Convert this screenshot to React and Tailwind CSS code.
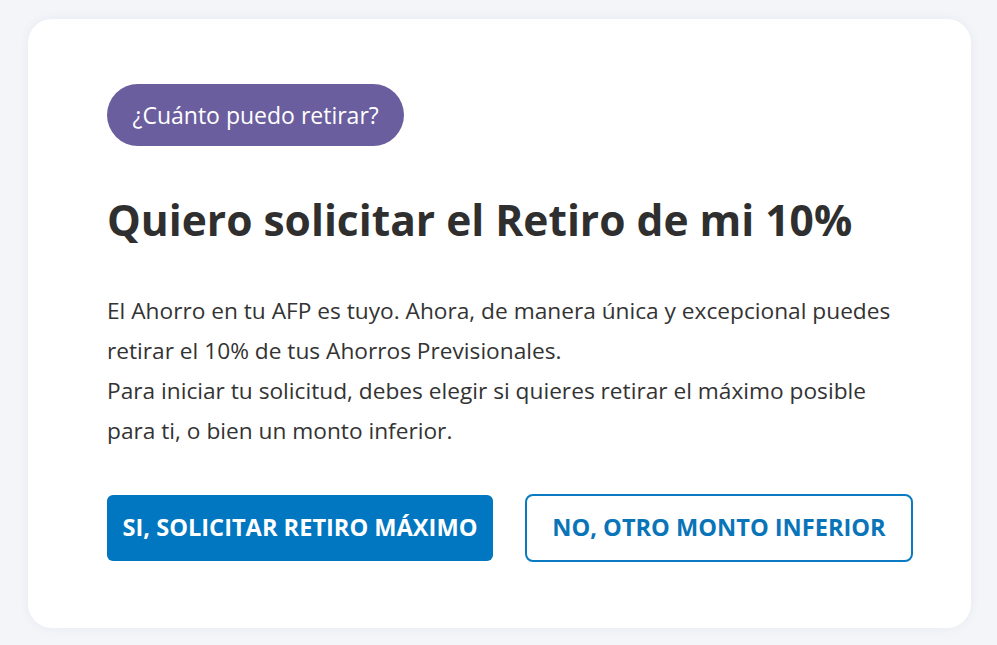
export default function App() {
  return (
    <div
      className="min-h-[645px] w-[997px] bg-[#f3f5f9] pt-[19px] pl-[28px] pr-[26px] pb-[17px]"
      style={{ fontFamily: '"Open Sans", "Noto Sans", sans-serif' }}
    >
      <div className="flex h-[609px] flex-col items-start rounded-[24px] bg-white pt-[65px] pl-[79px] pr-[30px] shadow-[0_0_12px_rgba(30,40,80,0.05)]">
        <span className="flex h-[62px] items-center rounded-full bg-[#6b5e9e] px-[25.5px] text-[23px] text-white">
          ¿Cuánto puedo retirar?
        </span>
        <h1 className="mt-[46px] text-[42.5px] font-bold leading-[56px] text-[#2f2f2f]">
          Quiero solicitar el Retiro de mi 10%
        </h1>
        <p className="mt-[43px] text-[22.7px] leading-[40px] text-[#333333] whitespace-nowrap">
          El Ahorro en tu AFP es tuyo. Ahora, de manera única y excepcional puedes
          <br />
          retirar el 10% de tus Ahorros Previsionales.
          <br />
          Para iniciar tu solicitud, debes elegir si quieres retirar el máximo posible
          <br />
          para ti, o bien un monto inferior.
        </p>
        <div className="mt-[44px] flex gap-[32px]">
          <button className="flex h-[66px] w-[386px] items-center justify-center rounded-[6px] bg-[#0077c0] text-[23.6px] font-bold text-white whitespace-nowrap">
            SI, SOLICITAR RETIRO MÁXIMO
          </button>
          <button className="flex h-[68px] w-[388px] -translate-y-[1px] items-center justify-center rounded-[8px] border-2 border-[#0a7bc2] bg-white text-[23.6px] font-bold text-[#0a74b8] whitespace-nowrap">
            NO, OTRO MONTO INFERIOR
          </button>
        </div>
      </div>
    </div>
  );
}
